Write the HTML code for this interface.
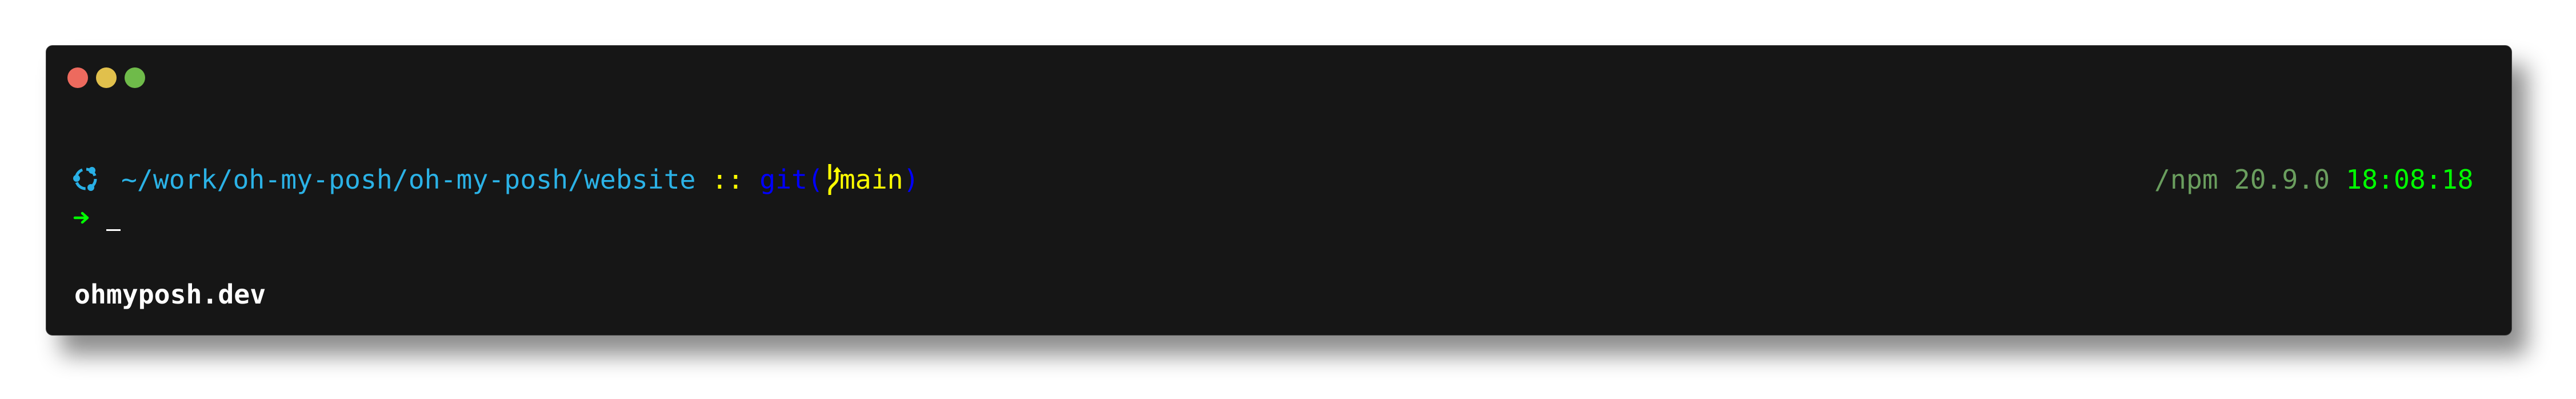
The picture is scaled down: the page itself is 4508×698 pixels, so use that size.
<!DOCTYPE html>
<html><head><meta charset="utf-8"><style>
html,body{margin:0;padding:0;background:#fff;width:4508px;height:698px;overflow:hidden}
.win{position:absolute;left:80px;top:79px;width:4314px;height:506px;background:#161616;border:1px solid #444;border-radius:12px;box-shadow:26px 34px 40px rgba(0,0,0,0.45)}
.dot{position:absolute;width:36px;height:36px;border-radius:50%;top:118px}
.t{position:absolute;font-family:"DejaVu Sans Mono","Liberation Mono",monospace;font-size:46.4px;line-height:46px;white-space:pre;margin:0}
</style></head><body>
<div class="win"></div>
<div class="dot" style="left:118px;background:#ed6a5e"></div>
<div class="dot" style="left:168px;background:#e1c04c"></div>
<div class="dot" style="left:218px;background:#6fbb4a"></div>

<svg style="position:absolute;left:124px;top:286px" width="56" height="56" viewBox="124 286 56 56">
<circle cx="150" cy="313" r="17" fill="none" stroke="#29b0e6" stroke-width="5" stroke-dasharray="20 7"/>
<circle cx="161" cy="298" r="6" fill="#29b0e6"/>
<circle cx="134" cy="312" r="6" fill="#29b0e6"/>
<circle cx="159" cy="328" r="6" fill="#29b0e6"/>
</svg>

<div class="t" style="left:212px;top:291px"><span style="color:#2bb2e6">~/work/oh-my-posh/oh-my-posh/website</span> <span style="color:#ffff00">::</span> <span style="color:#0000ff">git(</span> <span style="color:#ffff00">main</span><span style="color:#0000ff">)</span></div>

<svg style="position:absolute;left:1442px;top:284px" width="34" height="60" viewBox="1440 284 34 60">
<path d="M1450 287 V314" stroke="#ffff00" stroke-width="5" fill="none"/>
<path d="M1463 300 V312 C1463 322 1450 324 1450 334 V341" stroke="#ffff00" stroke-width="5" fill="none"/>
<path d="M1456 301 L1463 292 L1470 301 Z" fill="#ffff00"/>
</svg>

<div class="t" style="left:3770px;top:291px"><span style="color:#6a9e5e">/npm 20.9.0</span> <span style="color:#00ff00">18:08:18</span></div>

<svg style="position:absolute;left:128px;top:368px" width="30" height="26" viewBox="128 368 30 26">
<path d="M131 381 H153 M144 373 L153 381 L144 389" stroke="#00ff00" stroke-width="4.5" fill="none" stroke-linecap="round" stroke-linejoin="round"/>
</svg>
<div style="position:absolute;left:186px;top:401px;width:25px;height:3px;background:#fff"></div>

<div class="t" style="left:130px;top:492px;color:#fff;font-weight:bold">ohmyposh.dev</div>
</body></html>
